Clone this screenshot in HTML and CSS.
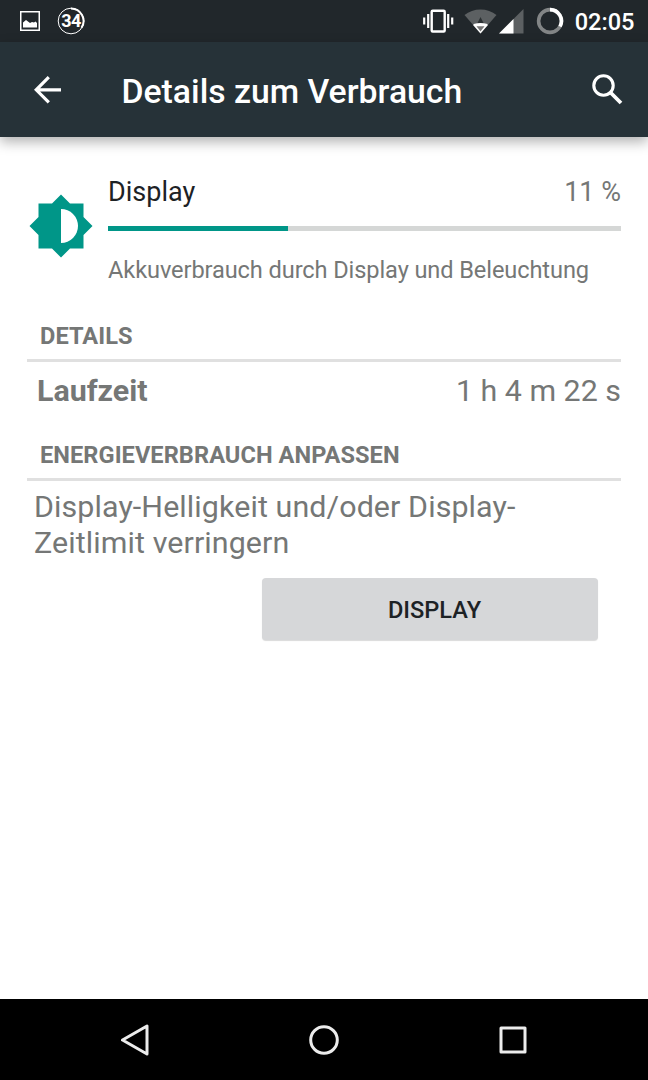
FILE: index.html
```html
<!DOCTYPE html>
<html lang="de">
<head>
    <meta charset="UTF-8">
    <meta name="viewport" content="width=device-width, initial-scale=1.0">
    <title>Details zum Verbrauch</title>
    <link rel="stylesheet" href="styles.css">
</head>
<body>

    <div class="status-bar">
        <svg width="20" height="20" viewBox="0 0 20 20">
            <rect x="0.75" y="0.75" width="18.5" height="18.5" fill="none" stroke="#fff" stroke-width="1.5"/>
            <path d="M3 16.5v-5L6 9l4 3 2-1 2 .5 1.500-1 1.500 1.500v4.500z" fill="#fff"/>
        </svg>
        <div class="battery-badge">
            <svg width="28" height="28" viewBox="0 0 28 28" fill="none" stroke="#fff">
                <circle cx="14" cy="14" r="12.8" stroke-width="1"/>
                <path d="M14 1.5A12.5 12.5 0 0 1 24.5 20.8" stroke-width="2"/>
            </svg>
            <span>34</span>
        </div>

        <div class="status-right">
            <svg width="31" height="24" viewBox="0 0 31 24" fill="none" stroke="#fff">
                <rect x="8.7" y="1.7" width="13" height="20.8" rx="1" stroke-width="2.4"/>
                <path d="M5.2 5v14M25.2 5v14" stroke-width="2.2"/>
                <path d="M1.2 8.5v7M29.2 8.5v7" stroke-width="2.2"/>
            </svg>
            <svg class="wifi" width="33" height="25" viewBox="0 0 33 25">
                <path d="M16.5 24.5L0.5 6C9-1.5 24-1.5 32.5 6z" fill="#5c6062"/>
                <path d="M16.5 8l3.5 7h-7z" fill="#2b3033"/>
                <path d="M16.5 24.5L9.5 16.5V15c5-1.500 9-1.500 14 0v1.500z" fill="#fff"/>
                <path d="M16.5 22.5L12.5 17.200h8z" fill="#777"/>
            </svg>
            <svg class="signal" width="25" height="25" viewBox="0 0 25 25">
                <path d="M24.5 0v24.5H0z" fill="#5c6062"/>
                <path d="M14.5 10v14.5H0z" fill="#fff"/>
            </svg>
            <svg class="ring" width="28" height="28" viewBox="0 0 28 28" fill="none" stroke-width="3.6">
                <circle cx="14" cy="14" r="11.4" stroke="#828586"/>
                <path d="M14 2.6A11.4 11.4 0 0 1 24 19.5" stroke="#fff"/>
            </svg>
            <span class="clock">02:05</span>
        </div>
    </div>

    <header class="app-bar">
        <svg width="28" height="28" viewBox="0 0 28 28" fill="none" stroke="#fff" stroke-width="3.2">
            <path d="M27 13.8H2.5M14.8 1.2L2.2 13.8l12.600 12.600"/>
        </svg>
        <h1>Details zum Verbrauch</h1>
        <svg class="search" width="31" height="31" viewBox="0 0 31 31" fill="none" stroke="#fff">
            <circle cx="11.5" cy="11.5" r="9.7" stroke-width="3.1"/>
            <path d="M18.5 18.5L29 29" stroke-width="3.8"/>
        </svg>
    </header>

    <main class="content">
        <section class="usage">
            <svg class="brightness" width="64" height="64" viewBox="0 0 64 64">
                <path d="M9.5 9.5H23l9-9 9 9h13.5V23l9 9-9 9v13.5H41l-9 9-9-9H9.5V41l-9-9 9-9z" fill="#009688"/>
                <path d="M32 15a17 17 0 0 1 0 34z" fill="#fff"/>
            </svg>
            <div class="usage-info">
                <div class="usage-title">
                    <span>Display</span>
                    <span class="percent">11 %</span>
                </div>
                <div class="progress"><div class="progress-fill"></div></div>
                <p class="summary">Akkuverbrauch durch Display und Beleuchtung</p>
            </div>
        </section>

        <h2>DETAILS</h2>
        <div class="detail-row">
            <strong>Laufzeit</strong>
            <span>1 h 4 m 22 s</span>
        </div>

        <h2>ENERGIEVERBRAUCH ANPASSEN</h2>
        <p class="hint">Display-Helligkeit und/oder Display-<br>Zeitlimit verringern</p>
        <button class="display-btn">DISPLAY</button>
    </main>

    <nav class="nav-bar">
        <svg width="32" height="32" viewBox="0 0 32 32"><path d="M28 2v28L3.500 16z"/></svg>
        <svg width="32" height="32" viewBox="0 0 32 32"><circle cx="16" cy="16" r="13.3"/></svg>
        <svg width="32" height="32" viewBox="0 0 32 32"><rect x="4" y="4" width="24" height="24"/></svg>
    </nav>

</body>
</html>
```
FILE: styles.css
```css
* {
    box-sizing: border-box;
    margin: 0;
    padding: 0;
}
body {
    font-family: Roboto, sans-serif;
    height: 1080px;
    display: flex;
    flex-direction: column;
    background: white;
    color: #757776;
    overflow: hidden;
}
svg {
    display: block;
    flex: none;
}

/* Status bar */
.status-bar {
    height: 42px;
    display: flex;
    align-items: center;
    padding: 0 13.5px 0 20px;
    background: #21272b;
    color: white;
}
.battery-badge {
    display: grid;
    place-items: center;
    margin-left: 17px;
    font-size: 18px;
    font-weight: 700;
    line-height: 28px;
    letter-spacing: -0.6px;
}
.battery-badge > * {
    grid-area: 1 / 1;
}
.status-right {
    display: flex;
    align-items: center;
    margin-left: auto;
}
.wifi {
    margin-left: 10px;
}
.signal {
    margin-left: 2px;
}
.ring {
    margin-left: 12px;
}
.clock {
    margin-left: 11px;
    font-size: 23.6px;
    font-weight: 500;
    line-height: 42px;
    padding-top: 2px;
}

/* Toolbar */
.app-bar {
    height: 95px;
    flex: none;
    display: flex;
    align-items: center;
    padding: 0 25px 0 34px;
    background: #263238;
    color: white;
    box-shadow: 0 5px 12px rgba(0, 0, 0, 0.3);
}
.app-bar h1 {
    margin-left: 59.5px;
    padding-top: 4px;
    font-size: 33.75px;
    font-weight: 500;
    line-height: 40px;
}
.search {
    margin-left: auto;
}

/* Page */
.content {
    flex: 1;
    display: flex;
    flex-direction: column;
    padding: 39px 27px 0;
}
.usage {
    display: flex;
    gap: 15.5px;
    margin-bottom: 38px;
}
.brightness {
    margin: 18px 0 0 1.5px;
}
.usage-info {
    flex: 1;
}
.usage-title {
    display: flex;
    justify-content: space-between;
    font-size: 27px;
    line-height: 32px;
    color: #1d2225;
}
.usage-title .percent {
    color: #757776;
}
.progress {
    height: 5px;
    margin: 18px 0 25px;
    background: #d5d7d6;
}
.progress-fill {
    width: 35.1%;
    height: 100%;
    background: #009688;
}
.summary {
    font-size: 23.6px;
    line-height: 28px;
    letter-spacing: -0.1px;
}
h2 {
    padding: 0 13px 9px;
    border-bottom: 3px solid #e0e0e0;
    font-size: 23.6px;
    font-weight: 700;
    line-height: 28px;
    letter-spacing: 0.05px;
}
.detail-row {
    display: flex;
    justify-content: space-between;
    padding: 11px 0 32px 10px;
    font-size: 30.4px;
    line-height: 36px;
}
.hint {
    padding: 8px 7px 0;
    font-size: 30.4px;
    line-height: 35.6px;
    letter-spacing: 0.1px;
}
.display-btn {
    align-self: flex-end;
    width: 336px;
    height: 62px;
    margin: 18px 23px 0 0;
    padding: 1px 0 0 9px;
    border: none;
    border-radius: 4px;
    background: #d6d7d9;
    box-shadow: 0 1px 1px rgba(0, 0, 0, 0.15);
    color: #1d2225;
    font-family: inherit;
    font-size: 23.6px;
    font-weight: 500;
}

/* Navigation bar */
.nav-bar {
    height: 81px;
    display: flex;
    align-items: center;
    justify-content: center;
    gap: 157px;
    background: black;
}
.nav-bar svg {
    fill: none;
    stroke: #ececec;
    stroke-width: 3px;
    stroke-linejoin: round;
}
```
